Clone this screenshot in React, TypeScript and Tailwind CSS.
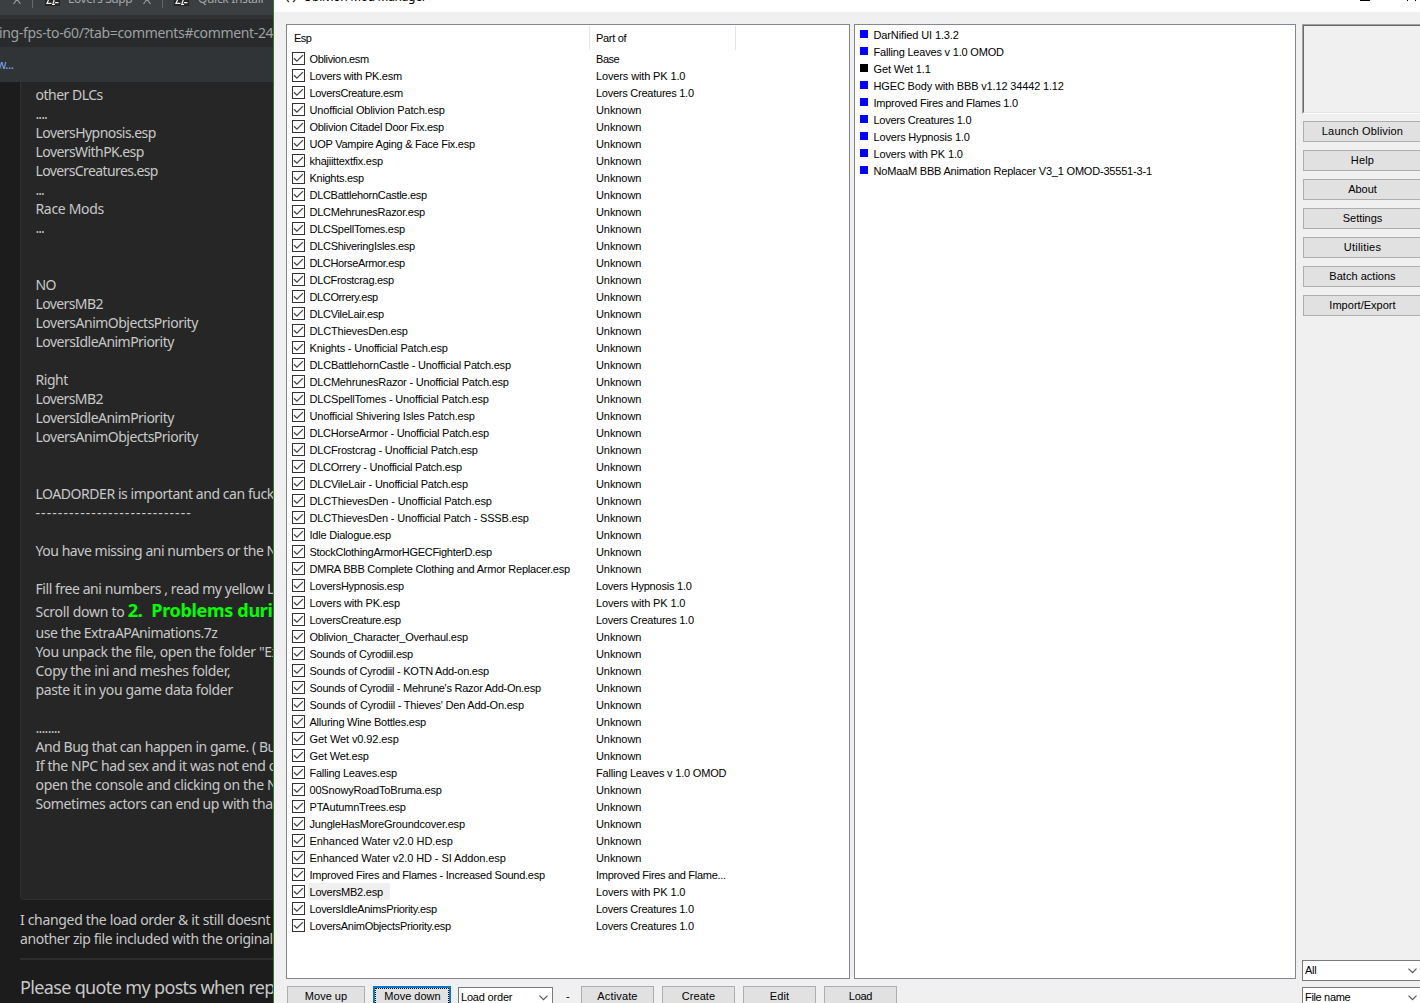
import { useLayoutEffect, useRef } from "react";

const UI = "font-['Liberation_Sans',Arial,sans-serif]";

// Text whose tracking is adjusted so that it fills a known width.
function Fit({ t, w, className = "" }: { t: string; w?: number; className?: string }) {
  const ref = useRef<HTMLSpanElement>(null);
  useLayoutEffect(() => {
    const el = ref.current;
    if (!el || !w) return;
    el.style.letterSpacing = "0px";
    const natural = el.getBoundingClientRect().width;
    el.style.letterSpacing = `${(w - 0.7 - natural) / t.length}px`;
  }, [t, w]);
  return (
    <span ref={ref} className={`inline-block whitespace-pre ${className}`}>
      {t}
    </span>
  );
}

const U = "Unknown";
const LC = "Lovers Creatures 1.0";
const PK = "Lovers with PK 1.0";
const plugins: [string, number, string][] = [
  ["Oblivion.esm", 60, "Base"],
  ["Lovers with PK.esm", 93, PK],
  ["LoversCreature.esm", 94, LC],
  ["Unofficial Oblivion Patch.esp", 136, U],
  ["Oblivion Citadel Door Fix.esp", 135, U],
  ["UOP Vampire Aging & Face Fix.esp", 166, U],
  ["khajiittextfix.esp", 74, U],
  ["Knights.esp", 55, U],
  ["DLCBattlehornCastle.esp", 118, U],
  ["DLCMehrunesRazor.esp", 116, U],
  ["DLCSpellTomes.esp", 96, U],
  ["DLCShiveringIsles.esp", 106, U],
  ["DLCHorseArmor.esp", 96, U],
  ["DLCFrostcrag.esp", 85, U],
  ["DLCOrrery.esp", 69, U],
  ["DLCVileLair.esp", 75, U],
  ["DLCThievesDen.esp", 99, U],
  ["Knights - Unofficial Patch.esp", 139, U],
  ["DLCBattlehornCastle - Unofficial Patch.esp", 202, U],
  ["DLCMehrunesRazor - Unofficial Patch.esp", 200, U],
  ["DLCSpellTomes - Unofficial Patch.esp", 180, U],
  ["Unofficial Shivering Isles Patch.esp", 166, U],
  ["DLCHorseArmor - Unofficial Patch.esp", 180, U],
  ["DLCFrostcrag - Unofficial Patch.esp", 169, U],
  ["DLCOrrery - Unofficial Patch.esp", 153, U],
  ["DLCVileLair - Unofficial Patch.esp", 159, U],
  ["DLCThievesDen - Unofficial Patch.esp", 183, U],
  ["DLCThievesDen - Unofficial Patch - SSSB.esp", 220, U],
  ["Idle Dialogue.esp", 82, U],
  ["StockClothingArmorHGECFighterD.esp", 183, U],
  ["DMRA BBB Complete Clothing and Armor Replacer.esp", 261, U],
  ["LoversHypnosis.esp", 95, "Lovers Hypnosis 1.0"],
  ["Lovers with PK.esp", 91, PK],
  ["LoversCreature.esp", 92, LC],
  ["Oblivion_Character_Overhaul.esp", 159, U],
  ["Sounds of Cyrodiil.esp", 104, U],
  ["Sounds of Cyrodiil - KOTN Add-on.esp", 180, U],
  ["Sounds of Cyrodiil - Mehrune's Razor Add-On.esp", 232, U],
  ["Sounds of Cyrodiil - Thieves' Den Add-On.esp", 215, U],
  ["Alluring Wine Bottles.esp", 117, U],
  ["Get Wet v0.92.esp", 90, U],
  ["Get Wet.esp", 60, U],
  ["Falling Leaves.esp", 88, "Falling Leaves v 1.0 OMOD"],
  ["00SnowyRoadToBruma.esp", 133, U],
  ["PTAutumnTrees.esp", 97, U],
  ["JungleHasMoreGroundcover.esp", 156, U],
  ["Enhanced Water v2.0 HD.esp", 144, U],
  ["Enhanced Water v2.0 HD - SI Addon.esp", 197, U],
  ["Improved Fires and Flames - Increased Sound.esp", 236, "Improved Fires and Flame..."],
  ["LoversMB2.esp", 74, PK],
  ["LoversIdleAnimsPriority.esp", 128, LC],
  ["LoversAnimObjectsPriority.esp", 142, LC],
];

const partWidth: Record<string, number> = {
  Unknown: 46,
  Base: 24,
  [PK]: 90,
  [LC]: 98.5,
  "Lovers Hypnosis 1.0": 96.5,
  "Falling Leaves v 1.0 OMOD": 131,
  "Improved Fires and Flame...": 130.5,
};

const mods: [string, number][] = [
  ["DarNified UI 1.3.2", 86],
  ["Falling Leaves v 1.0 OMOD", 131],
  ["Get Wet 1.1", 58],
  ["HGEC Body with BBB v1.12 34442 1.12", 191],
  ["Improved Fires and Flames 1.0", 145],
  [LC, 98.5],
  ["Lovers Hypnosis 1.0", 97],
  [PK, 90],
  ["NoMaaM BBB Animation Replacer V3_1 OMOD-35551-3-1", 279],
];

// Each line: text, width (0 for a blank line)
const post: [string, number][] = [
  ["other DLCs", 68],
  ["....", 12],
  ["LoversHypnosis.esp", 121],
  ["LoversWithPK.esp", 109],
  ["LoversCreatures.esp", 123],
  ["...", 9],
  ["Race Mods", 69],
  ["...", 9],
  ["", 0],
  ["", 0],
  ["NO", 21],
  ["LoversMB2", 68],
  ["LoversAnimObjectsPriority", 163],
  ["LoversIdleAnimPriority", 139],
  ["", 0],
  ["Right", 33],
  ["LoversMB2", 68],
  ["LoversIdleAnimPriority", 139],
  ["LoversAnimObjectsPriority", 163],
  ["", 0],
  ["", 0],
  ["LOADORDER is important and can fuck", 239],
  ["----------------------------", 157],
  ["", 0],
  ["You have missing ani numbers or the N", 242],
  ["", 0],
  ["Fill free ani numbers , read my yellow L", 239],
];
const postEnd: [string, number][] = [
  ["use the ExtraAPAnimations.7z", 182.5],
  ["You unpack the file, open the folder \"Ex", 244],
  ["Copy the ini and meshes folder,", 195.5],
  ["paste it in you game data folder", 198],
  ["", 0],
  ["........", 25],
  ["And Bug that can happen in game. ( Bu", 241],
  ["If the NPC had sex and it was not end o", 242],
  ["open the console and clicking on the N", 242.5],
  ["Sometimes actors can end up with that", 242.5],
];

function Lines({ items }: { items: [string, number][] }) {
  return (
    <>
      {items.map(([t, w], i) => (
        <div key={i} className="h-[19px] leading-[19px]">
          {t && <Fit t={t} w={w} />}
        </div>
      ))}
    </>
  );
}

function TabIcon() {
  return (
    <svg width="15" height="6" viewBox="0 0 15 6" className="shrink-0">
      <path d="M0 0h15v6H0z" fill="#252525" />
      <path d="M3.500 0L2 3.300H6.500M9.200 0L8 3.500M7 4.300H10M10 2.700H13.500" fill="none" stroke="#eee" strokeWidth="1.300" />
    </svg>
  );
}

function TabClose() {
  return (
    <svg width="8" height="5" viewBox="0 0 8 5" className="shrink-0">
      <path d="M3.500 0L0.500 4M4.500 0L7.500 4M2.500 0.500H5.500" stroke="#999b9d" strokeWidth="1.200" fill="none" />
    </svg>
  );
}

function Browser() {
  return (
    <div className="flex h-[1003px] w-[273px] shrink-0 flex-col overflow-hidden bg-[#1c1c1c] font-['Noto_Sans','Open_Sans',sans-serif] text-[14px] text-[#c8c8c8]">
      <div className="flex h-[15px] shrink-0 items-start overflow-hidden bg-[#3c3f41] text-[12px] text-[#a4a6a8]">
        <div className="ml-[13px] flex w-[19px]"><TabClose /></div>
        <div className="h-[8px] w-px bg-[#68696b]" />
        <div className="ml-[12px]"><TabIcon /></div>
        <div className="ml-[8px] -mt-[10px] w-[66px] leading-[18px]"><Fit t="Lovers Supp" w={65} /></div>
        <div className="ml-[9px] flex w-[11px]"><TabClose /></div>
        <div className="ml-[8px] h-[8px] w-px bg-[#68696b]" />
        <div className="ml-[11px]"><TabIcon /></div>
        <div className="ml-[9px] -mt-[10px] leading-[18px]"><Fit t="Quick Install" w={66} /></div>
      </div>
      <div className="h-[4px] shrink-0 bg-[#2f3133]" />
      <div className="h-[28px] shrink-0 bg-[#282a2b] text-[14px] leading-[27px] text-[#9ea1a3]">
        <Fit t="ing-fps-to-60/?tab=comments#comment-24" w={275} className="-ml-px" />
      </div>
      <div className="h-[35px] shrink-0 bg-[#313437] text-[12px] leading-[35px] text-[#7aa5f5]">
        <Fit t="w..." w={17} className="-ml-[3px]" />
      </div>
      <div className="ml-5 h-[818px] w-[300px] shrink-0 rounded-bl border-b border-l border-[#303030] bg-[#262626] pl-[14.5px] pt-[3px]">
        <Lines items={post} />
        <div className="flex h-[25px] items-baseline leading-[25px]">
          <Fit t="Scroll down to " w={93} />
          <Fit t="2.  Problems duri" w={145.5} className="text-[18px] font-bold text-[#00ff00]" />
        </div>
        <Lines items={postEnd} />
      </div>
      <div className="ml-5 mt-[10px] shrink-0">
        <Lines items={[["I changed the load order & it still doesnt", 251], ["another zip file included with the original", 253.5]]} />
      </div>
      <div className="ml-5 mt-[10px] h-[2px] shrink-0 bg-[#2d2d2d]" />
      <div className="ml-5 mt-[15px] shrink-0 text-[18px] leading-[25px]">
        <Fit t="Please quote my posts when rep" w={255.5} />
      </div>
    </div>
  );
}

function Check() {
  return (
    <svg width="13" height="13" viewBox="0 0 13 13" className="shrink-0">
      <rect x="0.500" y="0.500" width="12" height="12" fill="#fff" stroke="#333" />
      <path d="M2 6.300L4.900 9.200L11 3.100" fill="none" stroke="#444" strokeWidth="1.300" />
    </svg>
  );
}

function Button({ t, w, className }: { t: string; w: number; className: string }) {
  return (
    <div className={`flex h-[21px] shrink-0 items-start justify-center border border-[#adadad] bg-[#e1e1e1] leading-[18px] ${className}`}>
      <Fit t={t} w={w} />
    </div>
  );
}

function Combo({ t, w, className }: { t: string; w: number; className: string }) {
  return (
    <div className={`flex h-[21px] shrink-0 items-start justify-between border border-[#7a7a7a] bg-white pl-[2px] pr-[4px] leading-[18px] ${className}`}>
      <Fit t={t} w={w} />
      <svg width="9" height="6" viewBox="0 0 9 6" className="mt-[7px]"><path d="M0.500 0.700L4.500 4.700L8.500 0.700" fill="none" stroke="#555" strokeWidth="1.200" /></svg>
    </div>
  );
}

export default function App() {
  return (
    <div className="flex h-[1003px] w-[1420px] overflow-hidden">
      <Browser />
      <div className="w-px shrink-0 bg-[#2c7a2c]" />
      <div className={`flex w-[1146px] shrink-0 flex-col bg-[#f0f0f0] text-[11px] text-black ${UI}`}>
        <div className="flex h-[12px] shrink-0 items-start overflow-hidden bg-white">
          <svg width="10" height="3" viewBox="0 0 10 3" className="ml-[12px]"><path d="M1 0L3 2M9 0L7 2" stroke="#4a3a2c" strokeWidth="1.300" /></svg>
          <div className="-mt-[12px] ml-[7px] font-['Noto_Sans',sans-serif] text-[12px] leading-[18px]"><Fit t="Oblivion Mod Manager" w={124} /></div>
          <div className="ml-[934px] h-px w-[10px] bg-black" />
          <svg width="11" height="2" viewBox="0 0 11 2" className="ml-[36px]"><path d="M1.500 0V1M9.500 0V1" stroke="#000" /></svg>
        </div>
        <div className="flex shrink-0 pl-[12px] pt-[12px]">
          <div className="h-[955px] w-[564px] shrink-0 border border-[#828790] bg-white">
            <div className="mt-px flex h-[24px] leading-[24px]">
              <div className="w-[303px] border-r border-[#e5e5e5] pl-[7px]"><Fit t="Esp" w={18} /></div>
              <div className="w-[146px] border-r border-[#e5e5e5] pl-[6px]"><Fit t="Part of" w={31} /></div>
            </div>
            {plugins.map(([name, w, part]) => (
              <div key={name} className="flex h-[17px] items-center pl-[5px] leading-[19px]">
                <Check />
                <div className="ml-[3px] h-[17px] w-[286px]">
                  <span className={`inline-block h-[17px] pl-[1.5px] pr-[7px] align-top ${name === "LoversMB2.esp" ? "bg-[#f0f0f0]" : ""}`}>
                    <Fit t={name} w={w} />
                  </span>
                </div>
                <Fit t={part} w={partWidth[part]} className="ml-[2px] h-[17px]" />
              </div>
            ))}
          </div>
          <div className="ml-[4px] h-[955px] w-[442px] shrink-0 border border-[#828790] bg-white pt-[1px]">
            {mods.map(([t, w]) => (
              <div key={t} className="flex h-[17px] items-center pl-[5px] leading-[19px]">
                <div className={`mb-[1px] size-[8px] ${t === "Get Wet 1.1" ? "bg-black" : "bg-[#0000ff]"}`} />
                <Fit t={t} w={w} className="ml-[5.5px] h-[17px]" />
              </div>
            ))}
          </div>
          <div className="ml-[6px] flex h-[984px] w-[124px] shrink-0 flex-col">
            <div className="h-[90px] shrink-0 border border-b-white border-l-[#a0a0a0] border-r-white border-t-[#a0a0a0]">
              <div className="h-full border-b border-l border-t border-b-[#e3e3e3] border-l-[#696969] border-t-[#696969]" />
            </div>
            <div className="ml-px mt-[7px] flex flex-col gap-[8px]">
              <Button t="Launch Oblivion" w={82} className="w-[119px]" />
              <Button t="Help" w={24} className="w-[119px]" />
              <Button t="About" w={29} className="w-[119px]" />
              <Button t="Settings" w={40} className="w-[119px]" />
              <Button t="Utilities" w={38} className="w-[119px]" />
              <Button t="Batch actions" w={67} className="w-[119px]" />
              <Button t="Import/Export" w={67} className="w-[119px]" />
            </div>
            <div className="mt-auto flex flex-col gap-[6px]">
              <Combo t="All" w={12} className="w-[120px]" />
              <Combo t="File name" w={46} className="w-[120px]" />
            </div>
          </div>
        </div>
        <div className="-mt-[22px] flex w-[1000px] shrink-0 items-start pl-[13px]">
          <Button t="Move up" w={43} className="w-[78px]" />
          <div className="ml-[8px] h-[21px] w-[78px] border-2 border-[#0078d7] bg-[#e1e1e1]">
            <div className="flex h-full justify-center border border-dotted border-black pl-px leading-[14px]"><Fit t="Move down" w={57} /></div>
          </div>
          <Combo t="Load order" w={52} className="ml-[7px] mt-px w-[95px]" />
          <div className="ml-[13px] w-[15px] leading-[20px]">-</div>
          <Button t="Activate" w={41} className="w-[73px]" />
          <Button t="Create" w={34} className="ml-[8px] w-[73px]" />
          <Button t="Edit" w={20} className="ml-[8px] w-[73px]" />
          <Button t="Load" w={24} className="ml-[8px] w-[73px]" />
        </div>
      </div>
    </div>
  );
}
